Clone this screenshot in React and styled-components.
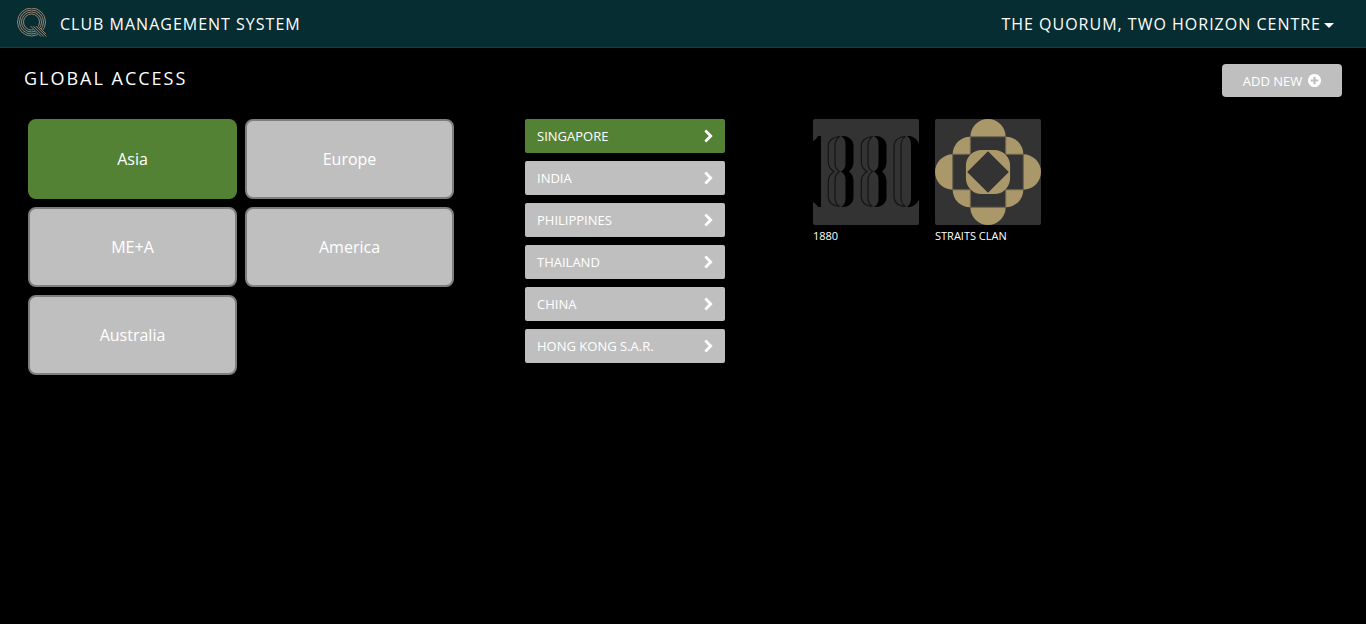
import React from "react";
import styled, { createGlobalStyle } from "styled-components";

const GlobalStyle = createGlobalStyle`
  * { box-sizing: border-box; }
  body {
    margin: 0;
    background: #000;
    color: #fff;
    font-family: "Open Sans", "Noto Sans", sans-serif;
    font-size: 16px;
  }
  button { font-family: inherit; color: inherit; cursor: pointer; }
`;

const Header = styled.header`
  display: flex;
  align-items: center;
  justify-content: space-between;
  height: 48px;
  padding: 0 32px 0 16px;
  background: #052d32;
  border-bottom: 1px solid #333;
`;

const Brand = styled.a`
  display: flex;
  align-items: center;
  gap: 12px;
  color: inherit;
  text-decoration: none;
  letter-spacing: 1px;
`;

const ClubMenu = styled.button`
  display: flex;
  align-items: center;
  gap: 3px;
  padding: 0;
  border: 0;
  background: none;
  font-size: 16px;
  letter-spacing: 1px;
`;

const Caret = styled.svg`
  display: block;
  margin-top: 4px;
`;

const TitleBar = styled.div`
  display: flex;
  align-items: flex-start;
  justify-content: space-between;
  padding: 16px 24px 22px;
`;

const Title = styled.h1`
  margin: 0;
  font-size: 18px;
  line-height: 28px;
  font-weight: 400;
  letter-spacing: 2px;
`;

const AddButton = styled.button`
  display: flex;
  align-items: center;
  justify-content: center;
  gap: 6px;
  width: 120px;
  height: 33px;
  padding: 0;
  border: 0;
  border-radius: 4px;
  background: #bfbfbf;
  font-size: 13px;
`;

const Columns = styled.main`
  display: grid;
  grid-template-columns: 426fr 200fr 546fr;
  column-gap: 71px;
  padding: 0 24px 24px 28px;
`;

const Regions = styled.nav`
  display: grid;
  grid-template-columns: 1fr 1fr;
  align-content: start;
  gap: 8px;
`;

const RegionButton = styled.button`
  height: 80px;
  border: 2px solid ${(p) => (p.$active ? "#548235" : "#7f7f7f")};
  border-radius: 8px;
  background: ${(p) => (p.$active ? "#548235" : "#bfbfbf")};
  font-size: 16px;
`;

const Countries = styled.nav`
  display: flex;
  flex-direction: column;
  gap: 8px;
`;

const CountryButton = styled.button`
  display: flex;
  align-items: center;
  justify-content: space-between;
  height: 34px;
  padding: 0 12px;
  border: 0;
  border-radius: 2px;
  background: ${(p) => (p.$active ? "#548235" : "#bfbfbf")};
  font-size: 13px;
`;

const Clubs = styled.section`
  display: flex;
  flex-wrap: wrap;
  align-items: flex-start;
  gap: 16px;
  padding-left: 17px;
`;

const ClubCard = styled.a`
  display: flex;
  flex-direction: column;
  gap: 3px;
  width: 106px;
  color: inherit;
  text-decoration: none;
  font-size: 11px;
  line-height: 16px;
`;

const ClubLogo = styled.svg`
  display: block;
  width: 106px;
  height: 106px;
  border-radius: 2px;
  background: #333;
`;

const QuorumLogo = () => (
  <svg width="32" height="32" viewBox="0 0 32 32" fill="none" stroke="#988474" strokeWidth="1" aria-hidden="true">
    <circle cx="15.5" cy="14" r="14" />
    <circle cx="15.5" cy="14" r="12" />
    <circle cx="15.5" cy="14" r="10" />
    <circle cx="15.5" cy="14" r="8" />
    <path d="M14 18H22.5L31 26V30H25Z" fill="#052d32" stroke="none" />
    <path d="M14.5 18L25 28.5M17.2 18L27.7 28.5M19.9 18L30.4 28.5M22.6 18.500L30 26" />
  </svg>
);

const PlusIcon = () => (
  <svg width="13" height="13" viewBox="128 128 1536 1536" fill="#fff" aria-hidden="true">
    <path d="M1344 960v-128q0-26-19-45t-45-19h-256v-256q0-26-19-45t-45-19h-128q-26 0-45 19t-19 45v256h-256q-26 0-45 19t-19 45v128q0 26 19 45t45 19h256v256q0 26 19 45t45 19h128q26 0 45-19t19-45v-256h256q26 0 45-19t19-45zm320-64q0 209-103 385.500t-279.500 279.500-385.500 103-385.500-103-279.500-279.500-103-385.500 103-385.500 279.500-279.500 385.500-103 385.500 103 279.500 279.500 103 385.500z" />
  </svg>
);

const Chevron = () => (
  <svg width="9" height="14" viewBox="288 -64 1152 1792" fill="#fff" aria-hidden="true">
    <path d="M1363 877l-742 742q-19 19-45 19t-45-19l-166-166q-19-19-19-45t19-45l531-531-531-531q-19-19-19-45t19-45l166-166q19-19 45-19t45 19l742 742q19 19 19 45t-19 45z" />
  </svg>
);

const Eight = ({ x }) => (
  <g transform={`translate(${x} 0)`}>
    <path
      d="M12 17.5C5 18 .8 22 .8 27V43C.8 47.5 3.5 50.5 6.5 52.5C3.5 54.5 .8 57.5 .8 62V78C.8 83 5 87 12 87.5M12 17.5C9 20 7.5 22 7.5 26V44C7.5 48 9.5 51 12 52.5C9.5 54 7.5 57 7.5 61V79C7.5 83 9 85.5 12 87.5"
      fill="none"
      stroke="#151515"
      strokeWidth="1.2"
    />
    <path
      d="M13.5 17H15C22 17 26 21.5 26 27V43C26 47.5 24 50.5 21.5 52.5C24 54.5 26 57.5 26 62V78C26 83.5 22 88 15 88H13.5C16.5 86.5 18 83.5 18 80V60.5C18 57 16.5 54 13.5 52.5C16.5 51 18 48 18 44.5V25C18 21.5 16.5 18.5 13.5 17Z"
      fill="#000"
    />
  </g>
);

const Logo1880 = () => (
  <ClubLogo viewBox="0 0 106 106" aria-hidden="true">
    <path d="M8 17H5C4 19 2 21 0 22V83C2 84 4 86 5 88H8Z" fill="#000" />
    <Eight x={14.5} />
    <Eight x={47.5} />
    <g transform="translate(80 0)">
      <path
        d="M12.5 17.5C5 18 1 22 1 28V77C1 83 5 87 12.5 87.5M12.5 17.5C9 20 8 22 8 27V78C8 83 9 85 12.5 87.5"
        fill="none"
        stroke="#151515"
        strokeWidth="1.2"
      />
      <path d="M14 17H16C22 17.5 25 22 26 25V80C25 83 22 87.5 16 88H14C17 86 18 83 18 79V26C18 22 17 19 14 17Z" fill="#000" />
    </g>
  </ClubLogo>
);

const StraitsLogo = () => (
  <ClubLogo viewBox="0 0 6 6" aria-hidden="true">
    <g fill="#aa986a">
      <path d="M2 1a1 1 0 0 1 2 0Z" />
      <path d="M2 5a1 1 0 0 0 2 0Z" />
      <path d="M1 2a1 1 0 0 0 0 2Z" />
      <path d="M5 2a1 1 0 0 1 0 2Z" />
      <path d="M1 2a1 1 0 0 1 1-1V2Z" />
      <path d="M4 1a1 1 0 0 1 1 1H4Z" />
      <path d="M1 4a1 1 0 0 0 1 1V4Z" />
      <path d="M4 5a1 1 0 0 0 1-1H4Z" />
      <path
        fillRule="evenodd"
        d="M2.65 1.75H3.35A.9.9 0 0 1 4.25 2.65V3.35A.9.9 0 0 1 3.35 4.25H2.65A.9.9 0 0 1 1.75 3.35V2.65A.9.9 0 0 1 2.65 1.75ZM3 1.82L1.82 3L3 4.18L4.18 3Z"
      />
    </g>
    <path
      d="M2 1H4M2 5H4M1 2V4M5 2V4M2 1V2H1M4 1V2H5M1 4H2V5M5 4H4V5"
      fill="none"
      stroke="#6f6650"
      strokeWidth="0.06"
    />
  </ClubLogo>
);

const regions = ["Asia", "Europe", "ME+A", "America", "Australia"];
const countries = ["SINGAPORE", "INDIA", "PHILIPPINES", "THAILAND", "CHINA", "HONG KONG S.A.R."];

export default function App() {
  const [region, setRegion] = React.useState("Asia");
  const [country, setCountry] = React.useState("SINGAPORE");
  return (
    <>
      <GlobalStyle />
      <Header>
        <Brand href="#home">
          <QuorumLogo />
          CLUB MANAGEMENT SYSTEM
        </Brand>
        <ClubMenu type="button" aria-haspopup="menu">
          THE QUORUM, TWO HORIZON CENTRE
          <Caret width="10" height="5" viewBox="0 0 10 5" aria-hidden="true">
            <path d="M0 0H10L5 5Z" fill="#fff" />
          </Caret>
        </ClubMenu>
      </Header>
      <TitleBar>
        <Title>GLOBAL ACCESS</Title>
        <AddButton type="button">
          ADD NEW
          <PlusIcon />
        </AddButton>
      </TitleBar>
      <Columns>
        <Regions aria-label="Regions">
          {regions.map((name) => (
            <RegionButton key={name} type="button" $active={name === region} onClick={() => setRegion(name)}>
              {name}
            </RegionButton>
          ))}
        </Regions>
        <Countries aria-label="Countries">
          {countries.map((name) => (
            <CountryButton key={name} type="button" $active={name === country} onClick={() => setCountry(name)}>
              {name}
              <Chevron />
            </CountryButton>
          ))}
        </Countries>
        <Clubs aria-label="Clubs">
          <ClubCard href="#1880">
            <Logo1880 />
            1880
          </ClubCard>
          <ClubCard href="#straits-clan">
            <StraitsLogo />
            STRAITS CLAN
          </ClubCard>
        </Clubs>
      </Columns>
    </>
  );
}
